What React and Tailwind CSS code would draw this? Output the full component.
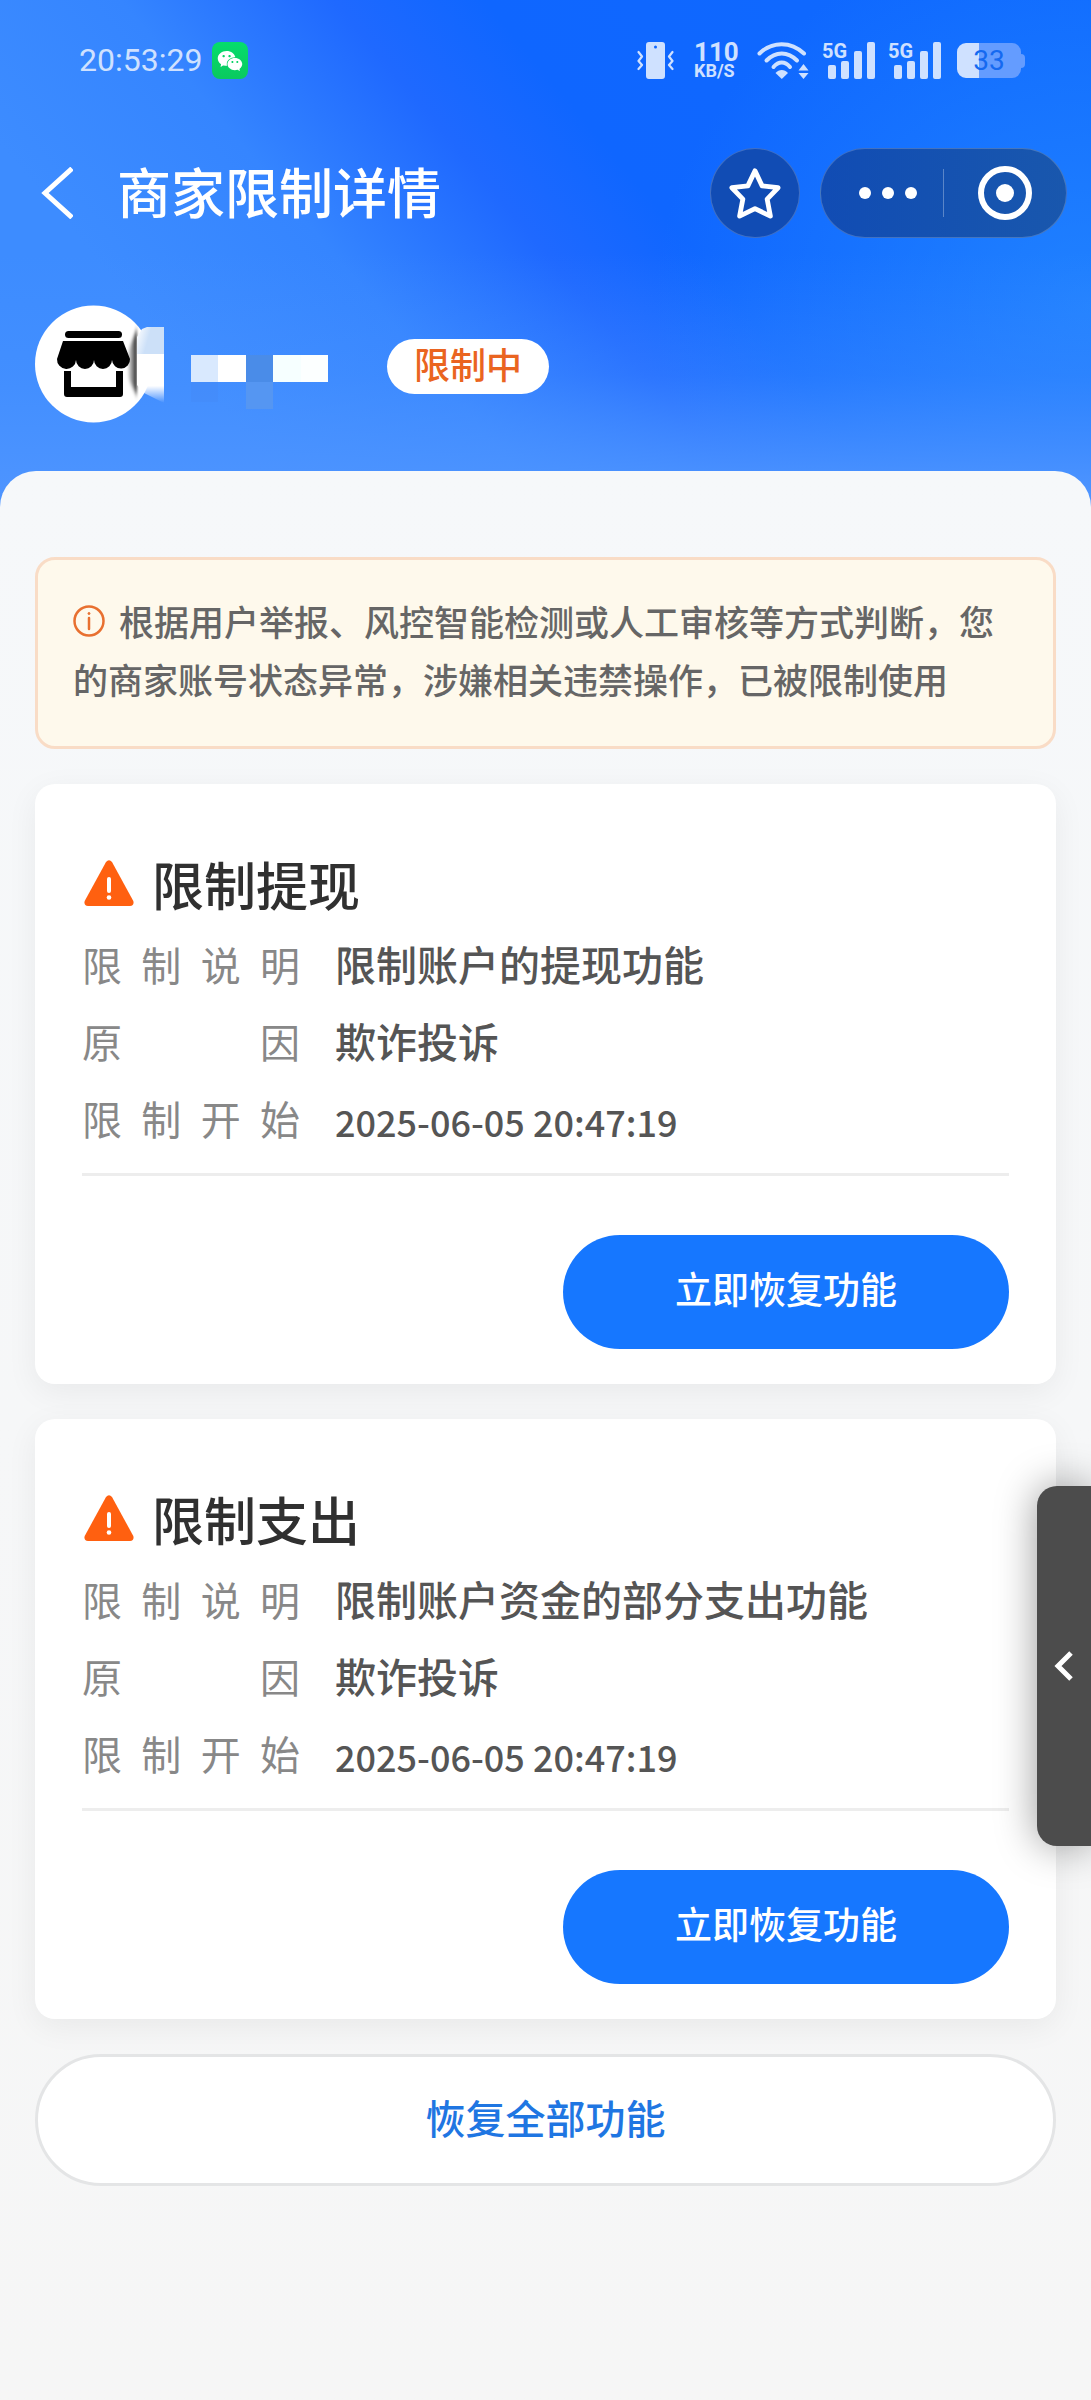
import { AiFillWechat } from 'react-icons/ai';

const RESTRICTIONS = [
  {
    id: 'withdraw',
    title: '限制提现',
    rows: [
      { label: '限制说明', value: '限制账户的提现功能' },
      { label: '原因', value: '欺诈投诉' },
      { label: '限制开始', value: '2025-06-05 20:47:19', isDate: true },
    ],
  },
  {
    id: 'spend',
    title: '限制支出',
    rows: [
      { label: '限制说明', value: '限制账户资金的部分支出功能' },
      { label: '原因', value: '欺诈投诉' },
      { label: '限制开始', value: '2025-06-05 20:47:19', isDate: true },
    ],
  },
];

const SignalIcon = () => (
  <svg className="w-[52px] h-[37px] overflow-visible" viewBox="0 0 52 37" fill="currentColor">
    <text x="-1" y="16" fontSize="20" fontWeight="700" fontFamily="Roboto, sans-serif">5G</text>
    <rect x="5" y="23" width="8" height="14" rx="2" />
    <rect x="18" y="19" width="8" height="18" rx="2" />
    <rect x="31" y="9" width="8" height="28" rx="2" />
    <rect x="44" y="0" width="8" height="37" rx="2" />
  </svg>
);

const StatusBar = () => (
  <div className="flex items-center justify-between pl-[79px] pr-[66px] text-[#cfe1ff]">
    <div className="flex items-center gap-[10px]">
      <span className="font-['Roboto',sans-serif] text-[32px] leading-[37px]">20:53:29</span>
      <span className="w-9 h-[37px] rounded-lg bg-gradient-to-b from-[#05dd6c] to-[#0ac95f] flex items-center justify-center">
        <AiFillWechat className="w-7 h-7 text-white" />
      </span>
    </div>

    <div className="flex items-center">
      {/* Vibrate */}
      <svg className="w-[37px] h-[37px]" viewBox="0 0 37 37" fill="none">
        <path
          fillRule="evenodd"
          fill="currentColor"
          d="M12 0h13a3 3 0 013 3v31a3 3 0 01-3 3H12a3 3 0 01-3-3V3a3 3 0 013-3zm6.500 3.500a1.500 1.500 0 100 3 1.500 1.500 0 000-3z"
        />
        <path
          stroke="currentColor"
          strokeWidth="2.200"
          strokeLinecap="round"
          strokeLinejoin="round"
          d="M1.500 10l3.500 4.500L1.500 19 5 23l-3.500 4M35.500 10L32 14.500l3.500 4.500-3.500 4 3.500 4"
        />
      </svg>
      <div className="ml-5 w-[46px] font-['Roboto',sans-serif] font-bold">
        <div className="text-[26px] leading-[20px]">110</div>
        <div className="text-[18px] leading-[17px]">KB/S</div>
      </div>
      {/* Wifi */}
      <svg className="ml-[17px] w-[52px] h-[37px]" viewBox="0 0 52 37" fill="none">
        <g stroke="currentColor" strokeWidth="4" strokeLinecap="round">
          <path d="M2.500 11.500C15-1 34-1 47 11.500" />
          <path d="M9.500 18.500C18.500 9 31 9 40 18.500" />
          <path d="M16.500 25C21.500 19 28 19 33 25" />
        </g>
        <path fill="currentColor" d="M18.500 31c3.500-4 9-4 12.500 0l-6.200 6z" />
        <path fill="currentColor" d="M41.500 28.500L46.500 22l5 6.500zM41.500 31h10l-5 6z" />
      </svg>
      <div className="ml-[14px] flex gap-[14px]">
        <SignalIcon />
        <SignalIcon />
      </div>
      {/* Battery */}
      <div className="ml-4 flex items-center">
        <div className="w-16 h-[35px] rounded-[9px] bg-gradient-to-r from-[#cfe1ff] from-35% to-[#649cff] to-35% flex items-center justify-center font-['Roboto',sans-serif] text-[28px] leading-none text-[#1569f0]">
          33
        </div>
        <div className="w-1 h-[14px] rounded-r bg-[#649cff]" />
      </div>
    </div>
  </div>
);

const NavBar = () => (
  <div className="mt-[69px] flex items-center pl-[41px] pr-[24px]">
    <button aria-label="返回" className="shrink-0 text-white">
      <svg className="w-8 h-[52px]" viewBox="0 0 32 52" fill="none" stroke="currentColor" strokeWidth="5">
        <path d="M31 1.500L4 26l27 24.500" />
      </svg>
    </button>
    <h1 className="ml-11 pt-1 flex-1 text-[54px] leading-[86px] font-medium text-white whitespace-nowrap">
      商家限制详情
    </h1>
    <button
      aria-label="收藏"
      className="shrink-0 w-[90px] h-[90px] rounded-full border border-white/20 bg-[#114cb4] flex items-center justify-center text-white"
    >
      <svg className="w-[52px] h-[52px]" viewBox="0 0 54 54" fill="none" stroke="currentColor" strokeWidth="5" strokeLinejoin="round">
        <path d="M27 4l7.400 15.600L51 21.500 39.600 33.300 43 51 27 43.300 11 51l3.400-17.700L3 21.500l16.600-1.900z" />
      </svg>
    </button>
    <div className="ml-5 shrink-0 w-[247px] h-[90px] rounded-full border border-white/20 bg-gradient-to-r from-[#114cb4] to-[#1957ad] flex items-center text-white">
      <button aria-label="更多" className="w-[122px] h-full flex items-center justify-center pl-3">
        <svg className="w-[58px] h-3" viewBox="0 0 58 12" fill="currentColor">
          <circle cx="6" cy="6" r="6" />
          <circle cx="29" cy="6" r="6" />
          <circle cx="52" cy="6" r="6" />
        </svg>
      </button>
      <div className="w-px h-12 bg-white/30" />
      <button aria-label="关闭" className="flex-1 h-full flex items-center justify-center">
        <svg className="w-[54px] h-[54px]" viewBox="0 0 54 54">
          <circle cx="27" cy="27" r="24" fill="none" stroke="currentColor" strokeWidth="6" />
          <circle cx="27" cy="27" r="9" fill="currentColor" />
        </svg>
      </button>
    </div>
  </div>
);

// Avatar and the pixelated shop name share one drawing because the mosaic runs over the avatar's edge
const MaskedShop = () => (
  <svg className="shrink-0 w-[294px] h-[118px]" viewBox="0 0 294 118" role="img" aria-label="商家头像">
    <defs>
      <linearGradient id="smear" x1="0" y1="0" x2="1" y2="0">
        <stop offset="0" stopColor="#000" stopOpacity="0" />
        <stop offset="1" stopColor="#000" stopOpacity="0.85" />
      </linearGradient>
      <linearGradient id="fade" x1="0" y1="0" x2="0" y2="1">
        <stop offset="0" stopColor="#fff" />
        <stop offset="0.650" stopColor="#fff" />
        <stop offset="1" stopColor="#fff" stopOpacity="0" />
      </linearGradient>
      <linearGradient id="corner" x1="0" y1="0" x2="1" y2="0.300">
        <stop offset="0" stopColor="#fff" />
        <stop offset="0.500" stopColor="#cce0f8" />
      </linearGradient>
      <filter id="soft" x="-20%" y="-20%" width="140%" height="140%">
        <feGaussianBlur stdDeviation="1 3" />
      </filter>
    </defs>
    <circle cx="58.500" cy="59" r="58.500" fill="#fff" />
    <rect x="30" y="26" width="57" height="7" rx="3.500" />
    <path d="M28 36h60l7 18a9 9 0 01-18 1 9 9 0 01-18 0 9 9 0 01-18 0 9 9 0 01-19-1z" />
    <path d="M29 66h7v16h45V66h7v23a3 3 0 01-3 3H32a3 3 0 01-3-3z" />
    <path d="M102 24v66L92 72V48z" fill="url(#smear)" filter="url(#soft)" />
    <path d="M107 24l5-2h17v28h-27V32z" fill="url(#corner)" />
    <path d="M102 49h27v49l-20-10-7-8z" fill="url(#fade)" />
    <rect x="156" y="50" width="27" height="27" fill="#d9e9fe" />
    <rect x="183" y="50" width="28" height="27" fill="#fff" />
    <rect x="211" y="50" width="27" height="27" fill="#4a8ce8" />
    <rect x="238" y="50" width="28" height="27" fill="#f6ffff" />
    <rect x="266" y="50" width="27" height="27" fill="#fcffff" />
    <rect x="156" y="77" width="27" height="20" fill="#4389f7" opacity="0.500" />
    <rect x="211" y="77" width="27" height="27" fill="#5596f2" />
  </svg>
);

const WarningIcon = () => (
  <svg className="shrink-0 mt-4 w-[50px] h-[46px]" viewBox="0 0 50 46">
    <path
      d="M22 2Q25-1.500 28 2L49.300 41Q50.500 45.500 46 46H4Q-.500 45.500.700 41z"
      fill="#ff6010"
    />
    <path d="M25 19v12" stroke="#fff" strokeWidth="4" strokeLinecap="round" />
    <circle cx="25" cy="37.500" r="2.300" fill="#fff" />
  </svg>
);

const RestrictionCard = ({ item }) => (
  <section className="rounded-[20px] bg-white px-[47px] pt-[60px] pb-[35px] shadow-[0_8px_32px_rgba(0,0,0,0.06)]">
    <div className="flex items-start gap-[18px] h-[85px] pl-0.5">
      <WarningIcon />
      <h2 className="text-[52px] leading-[88px] font-medium text-[#303030]">{item.title}</h2>
    </div>
    <dl className="border-b-[3px] border-[#ededed] pb-[13px]">
      {item.rows.map((row) => (
        <div key={row.label} className="flex items-center gap-[35px] h-[77px] text-[40px] leading-[77px]">
          <dt className="shrink-0 w-[218px] text-[#888888] [text-align-last:justify]">{row.label}</dt>
          {row.isDate ? (
            <dd className="font-['Noto_Sans_CJK_SC',sans-serif] text-[36px] font-medium text-[#555555] whitespace-nowrap">
              {row.value}
            </dd>
          ) : (
            <dd className="text-[41px] font-medium text-[#555555]">{row.value}</dd>
          )}
        </div>
      ))}
    </dl>
    <div className="mt-[59px] flex justify-end">
      <button className="w-[446px] h-[114px] rounded-full bg-[#1677ff] text-[37px] font-medium text-white">
        立即恢复功能
      </button>
    </div>
  </section>
);

const App = () => {
  return (
    <div className="relative min-h-screen flex flex-col overflow-x-hidden bg-[#f6f7f9] font-['Liberation_Sans','Noto_Sans_CJK_SC',sans-serif]">
      <header className="pt-[42px] pb-[84px] bg-[linear-gradient(180deg,rgba(77,148,255,0)_50%,rgba(77,148,255,0.3)_74%,rgba(77,148,255,1)_97%),radial-gradient(ellipse_40%_75%_at_100%_60%,rgba(40,140,255,0.7),rgba(40,140,255,0)),linear-gradient(50deg,#3d8cff_20%,#3585ff_36%,#1f69ff_50%,#0f66ff_60%,#0f6aff_100%)]">
        <StatusBar />
        <NavBar />
        <div className="mt-[67px] pl-[35px] flex items-center">
          <MaskedShop />
          <span className="ml-[58px] mt-1 px-[27px] rounded-full bg-white text-[36px] leading-[55px] font-medium text-[#ea6420]">
            限制中
          </span>
        </div>
      </header>

      <main className="-mt-9 flex-1 rounded-t-[36px] bg-gradient-to-b from-[#f6f8fa] to-[#f6f6f6] px-[35px] pt-[86px] pb-9 flex flex-col gap-[35px]">
        <div className="rounded-[20px] border-[3px] border-[#f9dcc6] bg-[#fef9ec] px-[35px] py-[35px]">
          <p className="text-[35px] leading-[58px] font-medium text-[#666666]">
            <svg className="mr-[14px] w-8 h-8 inline-block align-[-1px]" viewBox="0 0 32 32" fill="none" stroke="#e87030" strokeWidth="2.500">
              <circle cx="16" cy="16" r="14.500" />
              <path d="M16 13v11" strokeLinecap="round" />
              <circle cx="16" cy="8.500" r="1" fill="#e87030" strokeWidth="1" />
            </svg>
            根据用户举报、风控智能检测或人工审核等方式判断，您的商家账号状态异常，涉嫌相关违禁操作，已被限制使用
          </p>
        </div>

        {RESTRICTIONS.map((item) => (
          <RestrictionCard key={item.id} item={item} />
        ))}

        <button className="w-full h-[132px] rounded-full border-[3px] border-[#e4e5e6] bg-white text-[40px] font-medium text-[#1f76e2]">
          恢复全部功能
        </button>
      </main>

      {/* Edge drawer handle */}
      <button
        aria-label="展开侧栏"
        className="absolute right-0 top-[1486px] w-[54px] h-[360px] rounded-l-[20px] bg-[#4c4c4c] shadow-[0_0_40px_rgba(0,0,0,0.4)] flex items-center justify-center"
      >
        <svg className="w-5 h-[30px]" viewBox="0 0 20 30" fill="none" stroke="#fff" strokeWidth="5">
          <path d="M17 2L4 15l13 13" />
        </svg>
      </button>
    </div>
  );
};

export default App;
